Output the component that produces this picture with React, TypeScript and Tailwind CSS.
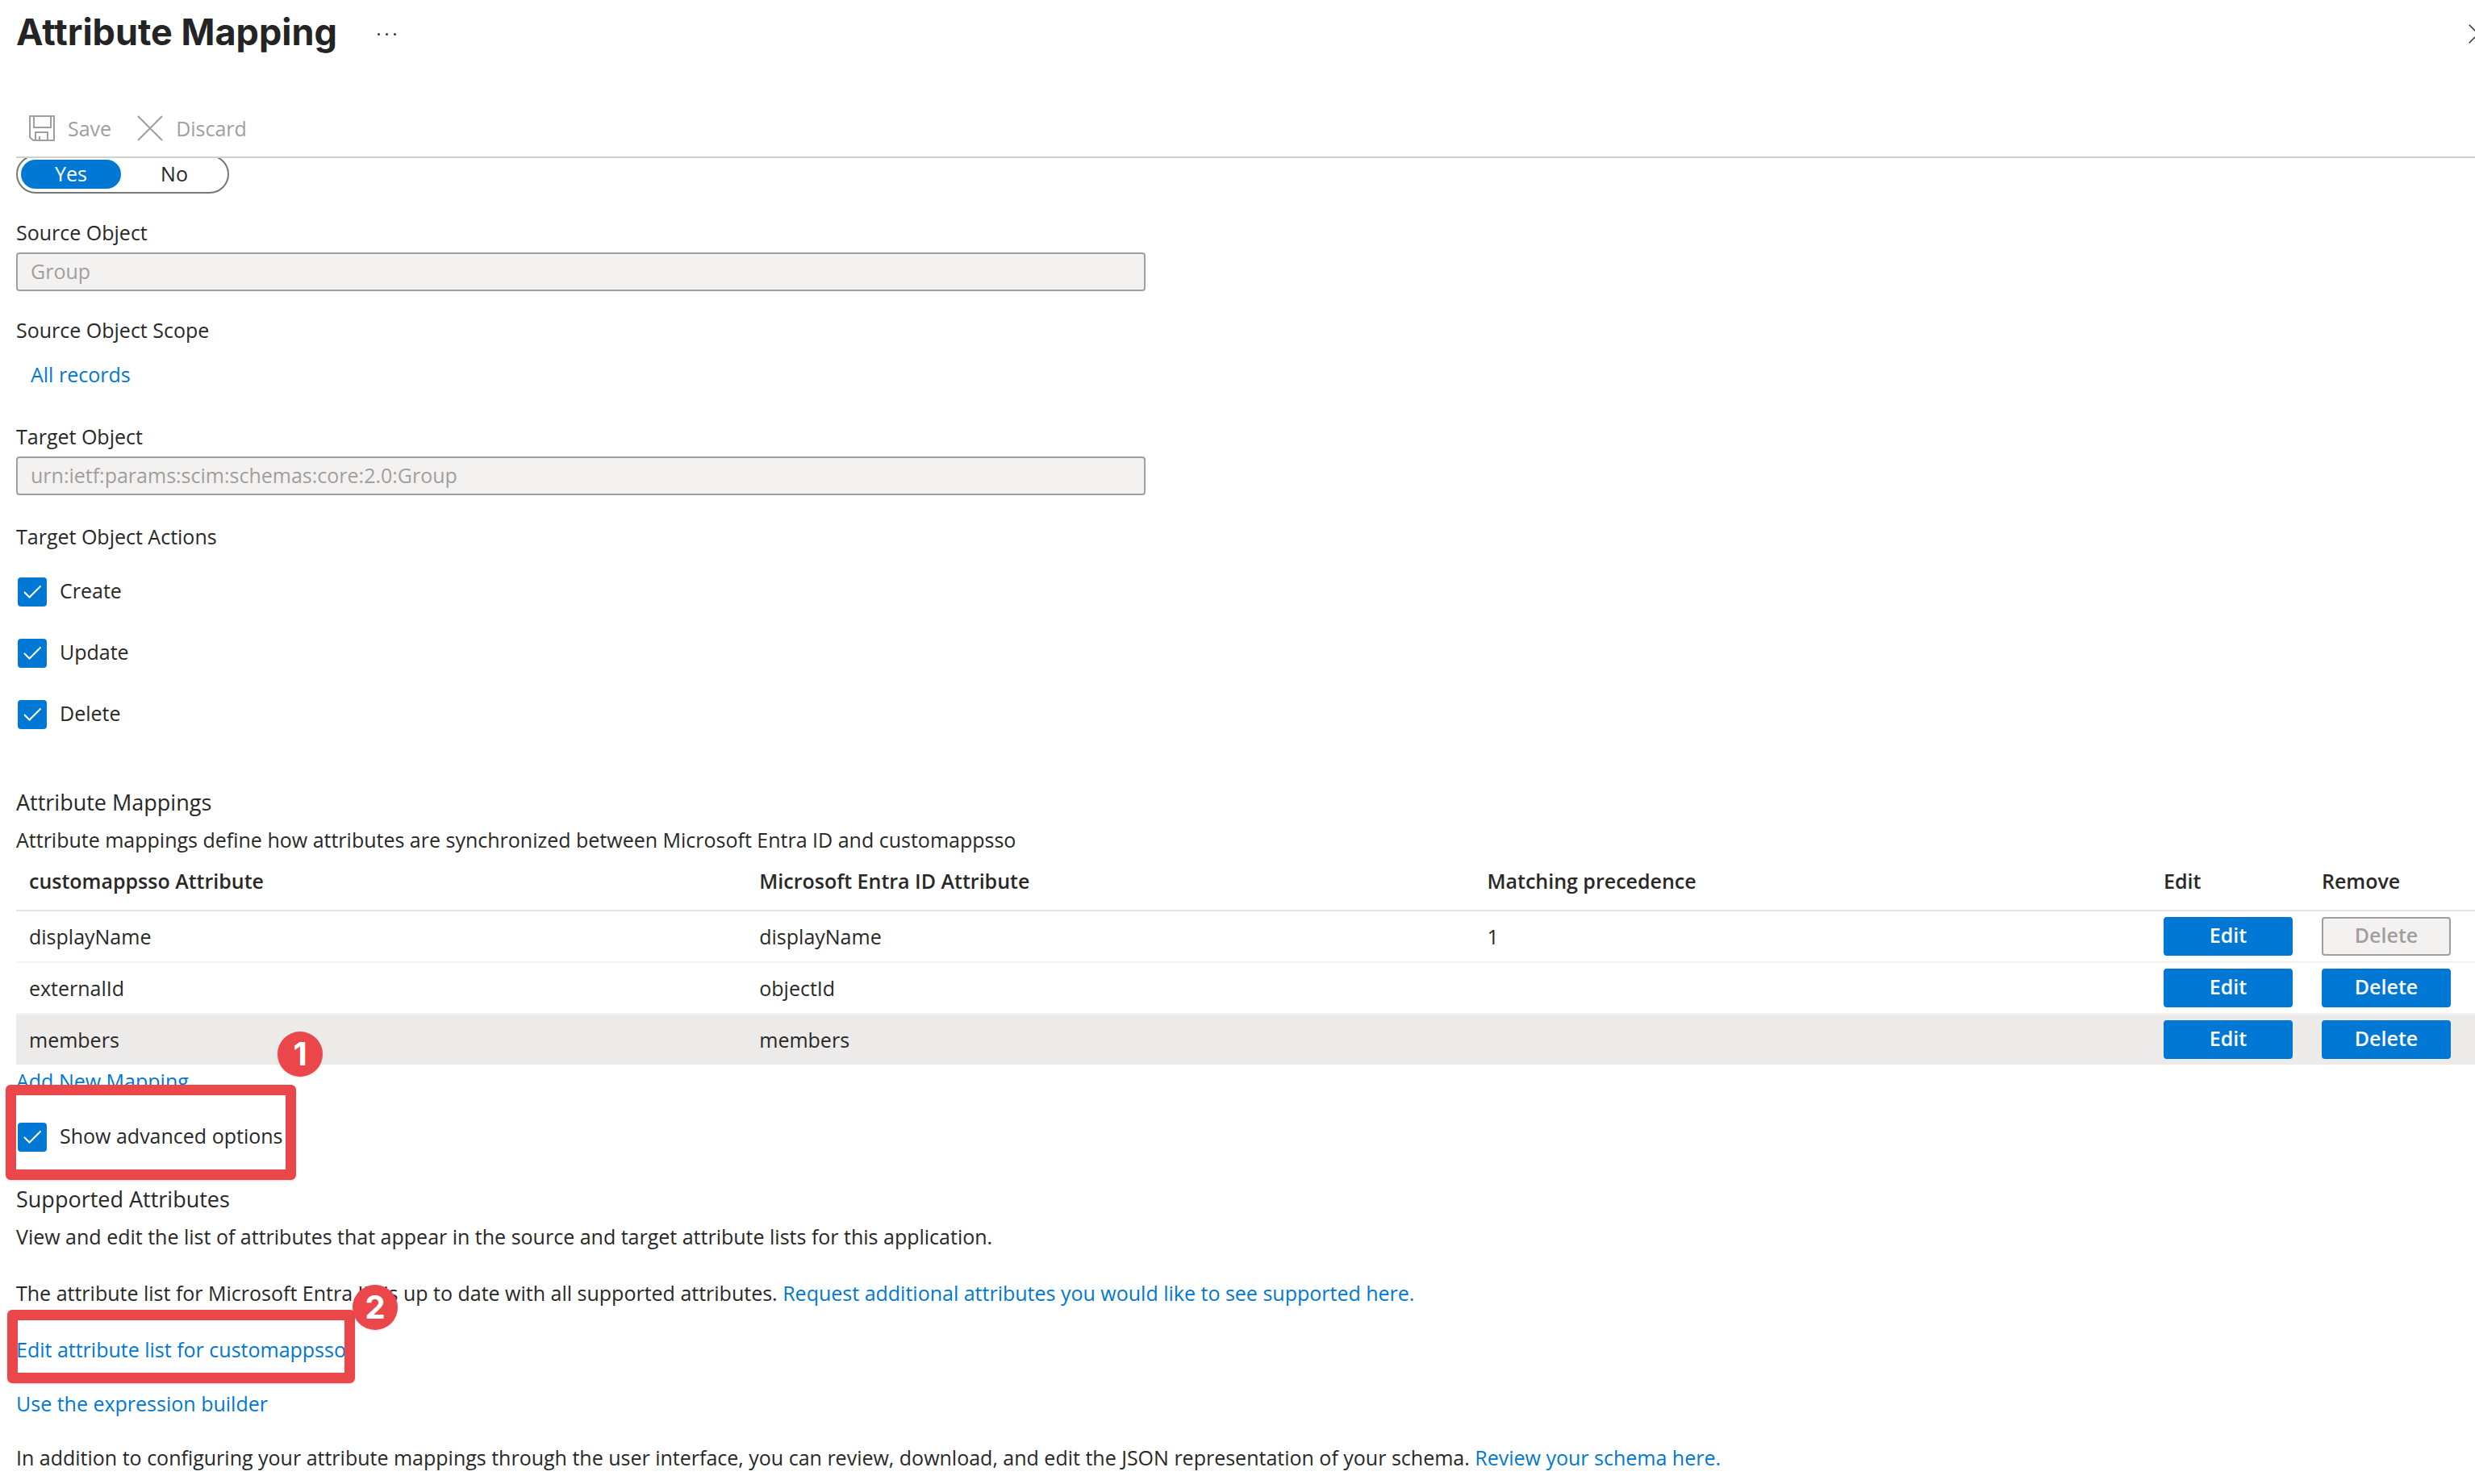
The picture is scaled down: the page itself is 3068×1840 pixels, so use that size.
import { useState } from "react";

const mappings = [
  { source: "displayName", target: "displayName", precedence: "1", removable: false, active: false },
  { source: "externalId", target: "objectId", precedence: "", removable: true, active: false },
  { source: "members", target: "members", precedence: "", removable: true, active: true },
];

function SaveIcon() {
  return (
    <svg viewBox="0 0 32 32" className="size-8" fill="none" stroke="currentColor" strokeWidth="2" aria-hidden="true">
      <path d="M1 1h30v30H5.500L1 27.500z" />
      <path d="M6 1v14h21V1" />
      <path d="M8 31V21h15v10M13 31v-5" />
    </svg>
  );
}

function CrossIcon({ className }: { className: string }) {
  return (
    <svg viewBox="0 0 32 32" className={className} fill="none" stroke="currentColor" strokeWidth="2" aria-hidden="true">
      <path d="M1 1l30 30M31 1L1 31" />
    </svg>
  );
}

function Checkbox({ label }: { label: string }) {
  const [checked, setChecked] = useState(true);
  return (
    <label className="flex w-fit items-start gap-4 pl-0.5 leading-8">
      <span className="grid size-9 place-items-center">
        <input
          type="checkbox"
          checked={checked}
          onChange={() => setChecked(!checked)}
          className="col-start-1 row-start-1 size-9 appearance-none rounded border-2 border-[#605e5c] bg-white checked:border-[#0078d4] checked:bg-[#0078d4]"
        />
        {checked && (
          <svg
            viewBox="0 0 36 36"
            className="pointer-events-none col-start-1 row-start-1 size-9"
            fill="none"
            stroke="white"
            strokeWidth="2"
            aria-hidden="true"
          >
            <path d="M8 18l6.500 6.500L28.500 10.500" />
          </svg>
        )}
      </span>
      {label}
    </label>
  );
}

function ReadOnlyField({ id, label, value }: { id: string; label: string; value: string }) {
  return (
    <div className="flex flex-col gap-[7px]">
      <label htmlFor={id}>{label}</label>
      <input
        id={id}
        disabled
        value={value}
        className="h-12 w-full max-w-[1400px] rounded border-2 border-[#a19f9d] bg-[#f3f2f1] px-4 pb-0.5 text-[#a19f9d]"
      />
    </div>
  );
}

function RowButton({ children, disabled = false }: { children: string; disabled?: boolean }) {
  return (
    <button
      type="button"
      disabled={disabled}
      className="block h-12 w-40 rounded border-2 border-[#0078d4] bg-[#0078d4] pb-1 leading-8 font-semibold text-white disabled:border-[#a19f9d] disabled:bg-[#f3f2f1] disabled:text-[#a19f9d]"
    >
      {children}
    </button>
  );
}

function Step({ n, className }: { n: number; className: string }) {
  return (
    <span
      className={`absolute z-10 flex size-14 items-center justify-center rounded-full bg-[#eb474b] font-[Inter,sans-serif] text-[40px] font-bold text-white shadow-sm ${className}`}
    >
      {n}
    </span>
  );
}

function Highlight({ className }: { className: string }) {
  return <span className={`pointer-events-none absolute rounded-md border-[13px] border-[#eb474b] shadow-sm ${className}`} />;
}

function Link({ children }: { children: string }) {
  return (
    <a href="#" className="text-[#0078d4] hover:underline">
      {children}
    </a>
  );
}

export default function App() {
  const [enabled, setEnabled] = useState(true);

  return (
    <div className="overflow-hidden bg-white pl-5 font-['Open_Sans','Noto_Sans',sans-serif] text-[25px] leading-9 text-[#292827]">
      <header className="flex h-[84px] items-center">
        <h1 className="pb-1 font-[Inter,sans-serif] text-[45px] leading-[80px] font-bold text-[#242424]">Attribute Mapping</h1>
        <button type="button" aria-label="More options" className="ml-[50px] flex items-center gap-[7px]">
          <span className="size-[3px] rounded-full bg-[#323130]" />
          <span className="size-[3px] rounded-full bg-[#323130]" />
          <span className="size-[3px] rounded-full bg-[#323130]" />
        </button>
        <button type="button" aria-label="Close" className="-mr-4 ml-auto">
          <CrossIcon className="size-6 text-[#323130]" />
        </button>
      </header>

      <div className="mt-10 flex h-[72px] items-center gap-8 border-b-2 border-[#d2d0ce] pl-4 text-[#a19f9d]">
        <button type="button" disabled className="flex items-center gap-4">
          <SaveIcon />
          Save
        </button>
        <button type="button" disabled className="flex items-center gap-4">
          <CrossIcon className="size-8" />
          Discard
        </button>
      </div>

      <main className="flex flex-col overflow-hidden">
        <div className="-mt-1 flex h-12 w-[264px] gap-1 rounded-full border-2 border-[#7a7876] p-1 leading-8">
          <button
            type="button"
            aria-pressed={enabled}
            onClick={() => setEnabled(true)}
            className="flex-1 rounded-full pb-0.5 text-center aria-pressed:bg-[#0078d4] aria-pressed:text-white"
          >
            Yes
          </button>
          <button
            type="button"
            aria-pressed={!enabled}
            onClick={() => setEnabled(false)}
            className="flex-1 rounded-full pb-0.5 text-center aria-pressed:bg-[#0078d4] aria-pressed:text-white"
          >
            No
          </button>
        </div>

        <div className="mt-[30px]">
          <ReadOnlyField id="source-object" label="Source Object" value="Group" />
        </div>
        <div className="mt-[30px]">Source Object Scope</div>
        <div className="mt-[19px] pl-[18px]">
          <Link>All records</Link>
        </div>
        <div className="mt-[41px]">
          <ReadOnlyField id="target-object" label="Target Object" value="urn:ietf:params:scim:schemas:core:2.0:Group" />
        </div>

        <fieldset className="mt-[33px]">
          <legend>Target Object Actions</legend>
          <div className="mt-[33px] flex flex-col gap-10">
            <Checkbox label="Create" />
            <Checkbox label="Update" />
            <Checkbox label="Delete" />
          </div>
        </fieldset>
      </main>

      <section className="mt-[71px]">
        <h2 className="text-[27px] leading-10">Attribute Mappings</h2>
        <p className="mt-2">Attribute mappings define how attributes are synchronized between Microsoft Entra ID and customappsso</p>
        <table className="w-full table-fixed border-separate border-spacing-0 text-left">
          <thead>
            <tr className="[&>th]:border-b-2 [&>th]:border-[#e6e5e4] [&>th]:px-4 [&>th]:pt-[15px] [&>th]:pb-[18px] [&>th]:font-semibold">
              <th className="w-[29.7%]">customappsso Attribute</th>
              <th className="w-[29.6%]">Microsoft Entra ID Attribute</th>
              <th>Matching precedence</th>
              <th className="w-[196px]">Edit</th>
              <th className="w-[206px]">Remove</th>
            </tr>
          </thead>
          <tbody>
            {mappings.map((row) => (
              <tr
                key={row.source}
                className={`[&>td]:h-16 [&>td]:border-b-2 [&>td]:border-[#f3f2f1] [&>td]:px-4 last:[&>td]:h-[62px] last:[&>td]:border-b-0 ${row.active ? "bg-[#edebe9]" : ""}`}
              >
                <td>{row.source}</td>
                <td>{row.target}</td>
                <td>{row.precedence}</td>
                <td>
                  <RowButton>Edit</RowButton>
                </td>
                <td>
                  <RowButton disabled={!row.removable}>Delete</RowButton>
                </td>
              </tr>
            ))}
          </tbody>
        </table>
        <div className="mt-0.5">
          <Link>Add New Mapping</Link>
        </div>
        <div className="relative mt-[34px]">
          <Checkbox label="Show advanced options" />
          <Highlight className="-top-[47px] -left-[13px] h-[118px] w-[360px]" />
          <Step n={1} className="-top-[113px] left-[324px]" />
        </div>
      </section>

      <section className="mt-[39px] pb-3">
        <h2 className="text-[27px] leading-10">Supported Attributes</h2>
        <p className="mt-2">View and edit the list of attributes that appear in the source and target attribute lists for this application.</p>
        <p className="mt-[34px]">
          The attribute list for Microsoft Entra ID is up to date with all supported attributes.{" "}
          <Link>Request additional attributes you would like to see supported here.</Link>
        </p>
        <div className="relative mt-[34px]">
          <Link>Edit attribute list for customappsso</Link>
          <Highlight className="-top-[31px] -left-[11px] h-[91px] w-[431px]" />
          <Step n={2} className="-top-[62px] left-[417px]" />
        </div>
        <div className="mt-[31px]">
          <Link>Use the expression builder</Link>
        </div>
        <p className="mt-[31px]">
          In addition to configuring your attribute mappings through the user interface, you can review, download, and edit the JSON
          representation of your schema. <Link>Review your schema here.</Link>
        </p>
      </section>
    </div>
  );
}
